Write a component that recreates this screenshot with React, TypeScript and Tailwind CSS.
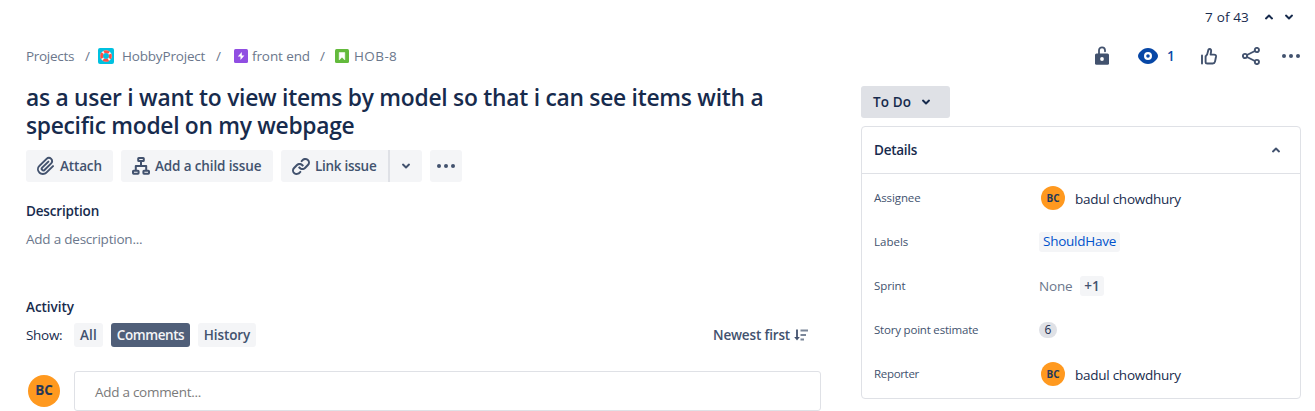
import type { ReactNode } from "react";

function Chevron({ up = false, className = "" }: { up?: boolean; className?: string }) {
  return (
    <svg viewBox="0 0 10 8" className={`h-2 w-2.5 shrink-0 ${className}`} fill="none" stroke="currentColor" strokeWidth="2" strokeLinecap="round" strokeLinejoin="round">
      <path d={up ? "M2 5.4 5 2.6l3 2.8" : "M2 2.6 5 5.4l3-2.8"} />
    </svg>
  );
}

function Dots() {
  return (
    <svg viewBox="0 0 18 4" className="h-1 w-[18px] shrink-0" fill="currentColor">
      <circle cx="2" cy="2" r="2" />
      <circle cx="9" cy="2" r="2" />
      <circle cx="16" cy="2" r="2" />
    </svg>
  );
}

function ProjectIcon() {
  return (
    <svg viewBox="0 0 16 16" className="ml-2 h-4 w-4 shrink-0">
      <rect width="16" height="16" rx="2" fill="#00c1e0" />
      <circle cx="8" cy="8" r="4.4" fill="none" stroke="#f4f5f7" strokeWidth="2.8" />
      <circle cx="8" cy="8" r="4.4" fill="none" stroke="#ff4f45" strokeWidth="2.8" strokeDasharray="5.3 1.612" strokeDashoffset="2.65" />
    </svg>
  );
}

function EpicIcon() {
  return (
    <svg viewBox="0 0 14 14" className="ml-[13px] h-3.5 w-3.5 shrink-0">
      <rect width="14" height="14" rx="1.5" fill="#904ee2" />
      <path d="M7.8 3 3.8 7.6h2.7V11l3.9-4.6H7.8z" fill="#fff" />
    </svg>
  );
}

function StoryIcon() {
  return (
    <svg viewBox="0 0 14 14" className="ml-[10px] h-3.5 w-3.5 shrink-0">
      <rect width="14" height="14" rx="1.5" fill="#63ba3c" />
      <path d="M4.2 3.5h5.6V11L7 8.2 4.2 11z" fill="#fff" stroke="#fff" strokeWidth=".5" strokeLinejoin="round" />
    </svg>
  );
}

function AttachIcon() {
  return (
    <svg viewBox="0 0 24 24" className="h-6 w-6 shrink-0" fill="currentColor">
      <path d="M11.643 17.965c-1.53 1.495-4.016 1.496-5.542.004a3.773 3.773 0 0 1 .002-5.412l7.147-6.985a2.316 2.316 0 0 1 3.233-.003c.893.873.895 2.282.004 3.153l-6.703 6.55a.653.653 0 0 1-.914-.008.62.62 0 0 1 0-.902l6.229-6.087a.941.941 0 0 0 0-1.353.995.995 0 0 0-1.384 0l-6.23 6.087a2.502 2.502 0 0 0 0 3.607 2.643 2.643 0 0 0 3.683.009l6.703-6.55a4.074 4.074 0 0 0-.003-5.859 4.306 4.306 0 0 0-6.002.003l-7.148 6.985a5.655 5.655 0 0 0-.001 8.118c2.29 2.237 6.015 2.238 8.31-.005l6.686-6.533a.941.941 0 0 0 0-1.353.995.995 0 0 0-1.384 0z" />
    </svg>
  );
}

function ChildIssueIcon() {
  return (
    <svg viewBox="0 0 18 18" className="mx-[3px] h-[18px] w-[18px] shrink-0" fill="none" stroke="currentColor" strokeWidth="2" strokeLinejoin="round">
      <rect x="6.2" y="1" width="5.6" height="3" rx=".6" />
      <rect x="1" y="13.7" width="5.6" height="3" rx=".6" />
      <rect x="11.4" y="13.7" width="5.6" height="3" rx=".6" />
      <path d="M9 4v5M3.8 13.7V9h10.4v4.7" />
    </svg>
  );
}

function LinkIcon() {
  return (
    <svg viewBox="0 0 24 24" className="h-6 w-6 shrink-0" fill="currentColor">
      <path d="M12.856 5.457l-.937.92a1.002 1.002 0 0 0 0 1.437 1.047 1.047 0 0 0 1.463 0l.984-.966c.967-.95 2.542-1.135 3.602-.288a2.54 2.54 0 0 1 .203 3.81l-2.903 2.852a2.646 2.646 0 0 1-3.696 0l-1.11-1.09L9 13.57l1.108 1.089c1.822 1.788 4.802 1.788 6.622 0l2.905-2.852a4.558 4.558 0 0 0-.357-6.82c-1.893-1.517-4.695-1.226-6.422.47" />
      <path d="M11.144 19.543l.937-.92a1.002 1.002 0 0 0 0-1.437 1.047 1.047 0 0 0-1.462 0l-.985.966c-.967.95-2.542 1.135-3.602.288a2.54 2.54 0 0 1-.203-3.81l2.903-2.852a2.646 2.646 0 0 1 3.696 0l1.11 1.09L15 11.43l-1.108-1.089c-1.822-1.788-4.802-1.788-6.622 0l-2.905 2.852a4.558 4.558 0 0 0 .357 6.82c1.893 1.517 4.695 1.226 6.422-.47" />
    </svg>
  );
}

function UnlockIcon() {
  return (
    <svg viewBox="0 0 14 19" className="mb-0.5 h-[19px] w-3.5 shrink-0">
      <path d="M4 8V4a3 3 0 0 1 6 0v1" fill="none" stroke="#42526e" strokeWidth="1.8" strokeLinecap="round" transform="translate(0 .3)" />
      <rect y="7.6" width="14" height="11.2" rx="1.5" fill="#42526e" />
      <circle cx="7" cy="13" r="1.9" fill="#fff" />
    </svg>
  );
}

function EyeIcon() {
  return (
    <svg viewBox="0 0 20 16" className="ml-[29px] h-4 w-5 shrink-0">
      <path d="M10 0C4.6 0 0 5.2 0 8s4.6 8 10 8 10-5.2 10-8-4.6-8-10-8z" fill="#0747a6" />
      <circle cx="10" cy="8" r="2.9" fill="#0747a6" stroke="#fff" strokeWidth="2.2" />
    </svg>
  );
}

function LikeIcon() {
  return (
    <svg viewBox="0 0 16 17" className="ml-[26px] h-[17px] w-4 shrink-0" fill="none" stroke="#42526e" strokeWidth="1.9" strokeLinecap="round" strokeLinejoin="round">
      <path d="M1 7.5v8" />
      <path d="M4.6 14.2V8.4C6.2 7.4 6.7 5.3 7 3.4c.2-1.4.7-2.4 1.6-2.4 1.3 0 1.7 1 1.5 2.3L9.6 6.6h3.5c1.3 0 2.1.9 1.9 2.1l-1 4.9c-.3 1.3-1 1.9-2.2 1.9H6.2c-1 0-1.6-.5-1.6-1.3z" />
    </svg>
  );
}

function ShareIcon() {
  return (
    <svg viewBox="0 0 18 18" className="ml-[25px] h-[18px] w-[18px] shrink-0" fill="none" stroke="#42526e" strokeWidth="1.9">
      <circle cx="3" cy="9" r="2.1" />
      <circle cx="14.9" cy="3" r="2.1" />
      <circle cx="14.9" cy="15" r="2.1" />
      <path d="m5 8 7.9-4M5 10l7.9 4" />
    </svg>
  );
}

function SortIcon() {
  return (
    <svg viewBox="0 0 14 12" className="ml-1 h-3 w-3.5 shrink-0" fill="none" stroke="#42526e">
      <path d="M3 .5v9" strokeWidth="1.8" />
      <path d="M.2 8h5.6L3 11.5z" fill="#42526e" stroke="none" />
      <path d="M6.5 1.5H14M6.5 6H12M6.5 10.5H10" strokeWidth="1.8" opacity=".7" />
    </svg>
  );
}

function Field({ label, tracking = "", children }: { label: string; tracking?: string; children: ReactNode }) {
  return (
    <div className="flex h-11 items-center">
      <span className={`w-[165px] shrink-0 text-[11.5px] text-[#42526e] ${tracking}`}>{label}</span>
      {children}
    </div>
  );
}

function Person() {
  return (
    <>
      <span className="ml-0.5 flex h-6 w-6 items-center justify-center rounded-full bg-[#ff991f] text-[10px] leading-none font-bold text-[#253858]">BC</span>
      <span className="ml-2.5 pt-0.5 tracking-[-0.26px]">badul chowdhury</span>
    </>
  );
}

export default function App() {
  return (
    <div className="h-[411px] w-[1315px] overflow-hidden bg-white font-['Open_Sans','Noto_Sans',sans-serif] text-[13.5px] leading-5 whitespace-nowrap text-[#172b4d]">
      <div className="flex h-[46px] items-start justify-end pt-[7px] pr-[21px]">
        <span className="mr-[15px] tracking-[0.15px]">7 of 43</span>
        <div className="flex h-5 items-center gap-2.5">
          <Chevron up />
          <Chevron />
        </div>
      </div>

      <div className="flex">
        <main className="ml-[26px] w-[795px] shrink-0">
          <nav className="flex h-5 items-center text-[#6b778c]">
            <span className="w-[59px] tracking-[-0.3px]">Projects</span>
            <span className="w-[5px]">/</span>
            <ProjectIcon />
            <span className="ml-2 w-[94px] tracking-[-0.18px]">HobbyProject</span>
            <span className="w-[5px]">/</span>
            <EpicIcon />
            <span className="ml-1 w-[68px] tracking-[-0.1px]">front end</span>
            <span className="w-[5px]">/</span>
            <StoryIcon />
            <span className="ml-[5px] tracking-[0.4px]">HOB-8</span>
          </nav>

          <h1 className="mt-[18px] text-[22.8px] leading-7 font-semibold">
            <span className="block tracking-[-0.255px]">as a user i want to view items by model so that i can see items with a</span>
            <span className="block tracking-[-0.29px]">specific model on my webpage</span>
          </h1>

          <div className="mt-2.5 flex h-8 gap-2 font-semibold text-[#42526e]">
            <button className="flex w-[87px] items-center rounded-[3px] bg-[#f4f5f7] pl-2">
              <AttachIcon />
              <span className="ml-0.5 tracking-[-0.15px]">Attach</span>
            </button>
            <button className="flex w-[152px] items-center rounded-[3px] bg-[#f4f5f7] pl-2">
              <ChildIssueIcon />
              <span className="ml-0.5 tracking-[-0.13px]">Add a child issue</span>
            </button>
            <div className="flex">
              <button className="flex w-[107px] items-center rounded-l-[3px] bg-[#f4f5f7] pl-2">
                <LinkIcon />
                <span className="ml-0.5 tracking-[-0.28px]">Link issue</span>
              </button>
              <div className="w-0.5 bg-[#dfe1e6]" />
              <button className="flex w-8 items-center justify-center rounded-r-[3px] bg-[#f4f5f7]">
                <Chevron />
              </button>
            </div>
            <button className="flex w-8 items-center justify-center rounded-[3px] bg-[#f4f5f7]">
              <Dots />
            </button>
          </div>

          <h2 className="mt-[19px] font-semibold tracking-[-0.16px]">Description</h2>
          <p className="mt-2 tracking-[-0.22px] text-[#6b778c]">Add a description...</p>

          <h2 className="mt-12 font-semibold tracking-[-0.05px]">Activity</h2>
          <div className="mt-1.5 flex h-6 items-center font-semibold text-[#42526e]">
            <span className="w-12 font-normal tracking-[-0.3px] text-[#172b4d]">Show:</span>
            <button className="h-6 w-[29px] rounded-[3px] bg-[#f4f5f7] tracking-[0.2px]">All</button>
            <button className="ml-2 h-6 w-[79px] rounded-[3px] bg-[#505f79] tracking-[-0.42px] text-[#f4f5f7]">Comments</button>
            <button className="ml-2 h-6 w-[58px] rounded-[3px] bg-[#f4f5f7] tracking-[-0.1px]">History</button>
            <button className="mr-[13px] ml-auto flex items-center">
              <span className="tracking-[-0.16px]">Newest first</span>
              <SortIcon />
            </button>
          </div>

          <div className="mt-6 flex items-center">
            <span className="ml-0.5 flex h-8 w-8 items-center justify-center rounded-full bg-[#ff991f] text-[13.5px] leading-none font-bold tracking-[-0.2px] text-[#253858]">BC</span>
            <div className="ml-3.5 flex h-10 w-[747px] items-center rounded-[3px] border border-[#dfe1e6] pt-0.5 pl-5 tracking-[-0.28px] text-[#7a7a7a]">Add a comment...</div>
          </div>
        </main>

        <aside className="ml-10 w-[440px] shrink-0">
          <div className="flex h-5 items-center pl-[234px]">
            <UnlockIcon />
            <EyeIcon />
            <span className="ml-[9px] w-2 font-semibold text-[#0747a6]">1</span>
            <LikeIcon />
            <ShareIcon />
            <span className="ml-[22px] text-[#42526e]"><Dots /></span>
          </div>

          <button className="mt-5 flex h-8 w-[89px] items-center rounded-[3px] bg-[#dfe1e6] pl-3 font-semibold">
            <span className="w-12 text-left tracking-[0.1px]">To Do</span>
            <Chevron />
          </button>

          <section className="mt-2 h-[273px] rounded-[4px] border border-[#dfe1e6]">
            <div className="flex h-[47px] items-center justify-between border-b border-[#dfe1e6] pr-[19px] pl-3">
              <h2 className="font-semibold tracking-[-0.26px]">Details</h2>
              <Chevron up className="text-[#42526e]" />
            </div>
            <div className="pt-0.5 pl-3">
              <Field label="Assignee" tracking="tracking-[-0.1px]"><Person /></Field>
              <Field label="Labels">
                <span className="flex h-5 w-[81px] items-center rounded-[3px] bg-[#f4f5f7] pb-0.5 pl-1 tracking-[-0.24px] text-[#0052cc]">ShouldHave</span>
              </Field>
              <Field label="Sprint" tracking="tracking-[-0.1px]">
                <span className="w-[41px] tracking-[-0.2px] text-[#6b778c]">None</span>
                <span className="flex h-5 w-6 items-center justify-center rounded-[3px] bg-[#f4f5f7] font-semibold text-[#42526e]">+1</span>
              </Field>
              <Field label="Story point estimate" tracking="tracking-[-0.2px]">
                <span className="flex h-4 w-[18px] items-center justify-center rounded-full bg-[#dfe1e6] text-xs leading-4">6</span>
              </Field>
              <Field label="Reporter" tracking="tracking-[-0.32px]"><Person /></Field>
            </div>
          </section>
        </aside>
      </div>
    </div>
  );
}
